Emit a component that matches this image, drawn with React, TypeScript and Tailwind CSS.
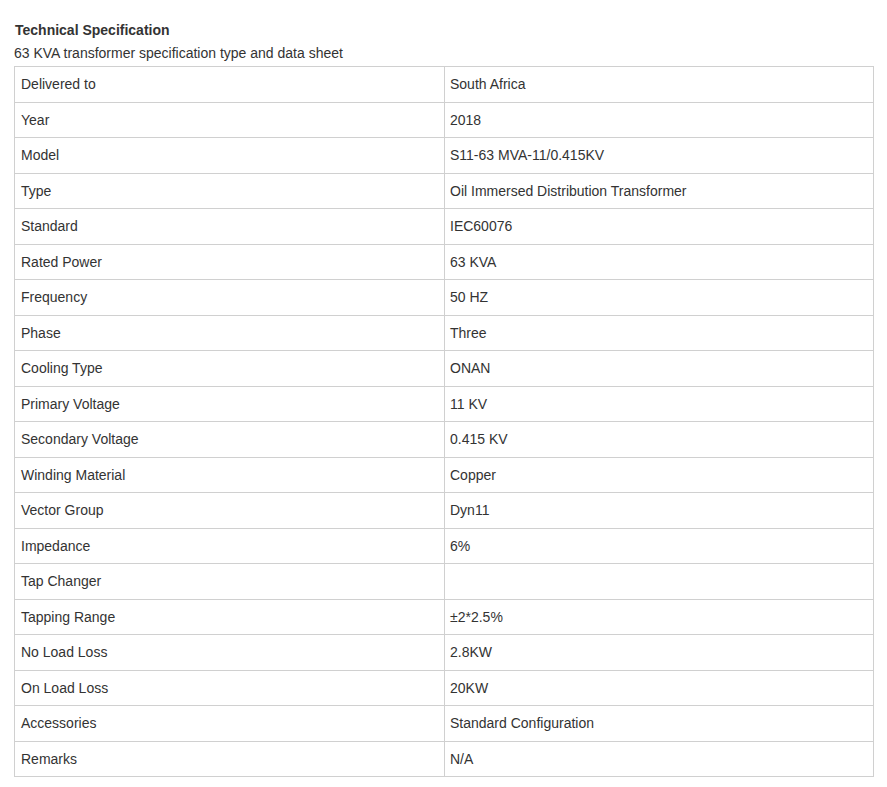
import React from "react";

const SPEC_ROWS: [string, string][] = [
  ["Delivered to", "South Africa"],
  ["Year", "2018"],
  ["Model", "S11-63 MVA-11/0.415KV"],
  ["Type", "Oil Immersed Distribution Transformer"],
  ["Standard", "IEC60076"],
  ["Rated Power", "63 KVA"],
  ["Frequency", "50 HZ"],
  ["Phase", "Three"],
  ["Cooling Type", "ONAN"],
  ["Primary Voltage", "11 KV"],
  ["Secondary Voltage", "0.415 KV"],
  ["Winding Material", "Copper"],
  ["Vector Group", "Dyn11"],
  ["Impedance", "6%"],
  ["Tap Changer", ""],
  ["Tapping Range", "±2*2.5%"],
  ["No Load Loss", "2.8KW"],
  ["On Load Loss", "20KW"],
  ["Accessories", "Standard Configuration"],
  ["Remarks", "N/A"],
];

export default function App() {
  return (
    <div className="min-h-[787px] bg-white pl-[14px] pr-[13px] pt-[20px] font-['Liberation_Sans',Arial,sans-serif] text-[14px] text-[#333]">
      <h3 className="ml-px text-[14px] font-bold leading-[20px]">Technical Specification</h3>
      <p className="mt-[3px] leading-[20px]">63 KVA transformer specification type and data sheet</p>

      <table className="mt-[3px] w-[860px] table-fixed border-collapse">
        <tbody>
          {SPEC_ROWS.map(([label, value]) => (
            <tr key={label} className="h-[35.5px]">
              <td className="w-[430px] border border-[#d0d0d0] px-[6px] py-0 align-middle leading-[20px]">{label}</td>
              <td className="border border-[#d0d0d0] px-[5px] py-0 align-middle leading-[20px]">{value}</td>
            </tr>
          ))}
        </tbody>
      </table>
    </div>
  );
}
